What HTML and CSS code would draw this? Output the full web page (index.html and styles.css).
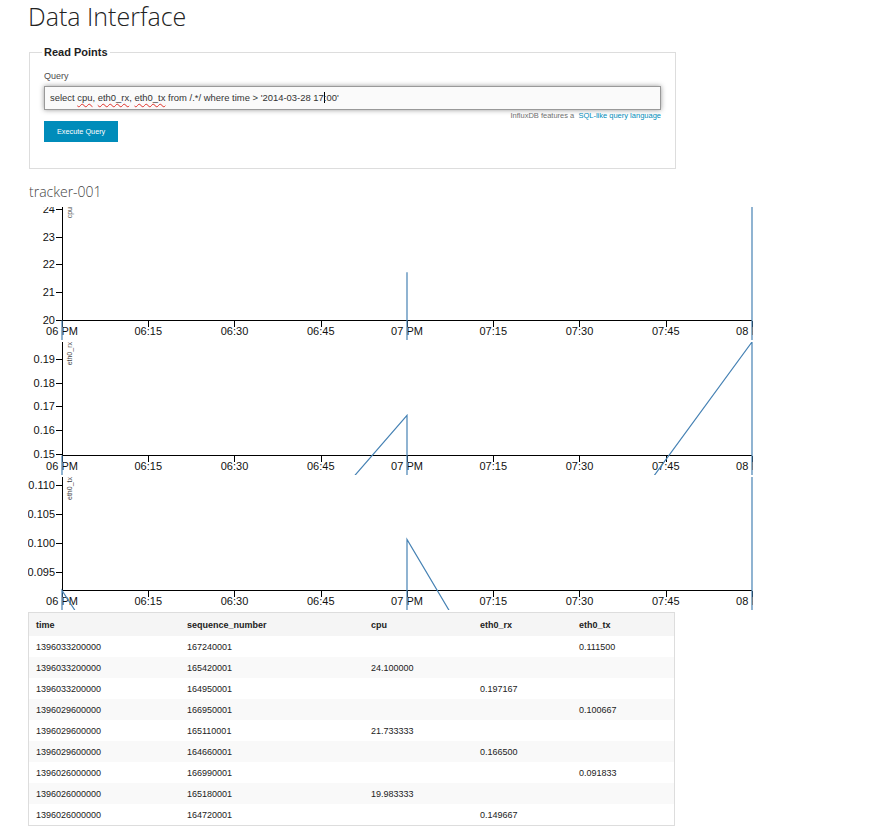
FILE: index.html
```html
<!DOCTYPE html>
<html lang="en">
<head>
<meta charset="utf-8">
<title>Data Interface</title>
<link rel="stylesheet" href="styles.css">
</head>
<body>
<div class="page">
  <h1 class="title">Data Interface</h1>

  <fieldset class="panel">
    <legend class="panel-legend">Read Points</legend>
    <label class="field-label">Query</label>
    <div class="query-input"><span class="sp">select </span><span class="misspelt">cpu</span><span class="sp">, </span><span class="misspelt">eth0_rx</span><span class="sp">, </span><span class="misspelt">eth0_tx</span><span class="sp"> from /.*/ where time &gt; '2014-03-28 17</span><span class="caret"></span><span class="sp">:00'</span></div>
    <div class="help">InfluxDB features a&nbsp; <a class="help-link" href="#">SQL-like query language</a></div>
    <button class="btn" type="button">Execute Query</button>
  </fieldset>

  <h2 class="series-title">tracker-001</h2>

  <div class="charts">
    <svg class="chart" width="725" height="133" viewBox="0 0 725 133">
      <g transform="translate(34,0)">
        <g class="axis">
          <path d="M0.5,0V113.5H690"/>
          <g class="ytick"><line x1="-6" x2="0" y1="113.04" y2="113.04"/><text x="-7" y="113.04" dy=".32em">20</text></g>
          <g class="ytick"><line x1="-6" x2="0" y1="85.47" y2="85.47"/><text x="-7" y="85.47" dy=".32em">21</text></g>
          <g class="ytick"><line x1="-6" x2="0" y1="57.9" y2="57.9"/><text x="-7" y="57.9" dy=".32em">22</text></g>
          <g class="ytick"><line x1="-6" x2="0" y1="30.33" y2="30.33"/><text x="-7" y="30.33" dy=".32em">23</text></g>
          <g class="ytick"><line x1="-6" x2="0" y1="2.76" y2="2.76"/><text x="-7" y="2.76" dy=".32em">24</text></g>
          <g class="xtick"><line x1="0.5" x2="0.5" y1="113.5" y2="119.5"/><text x="0" y="127.5">06 PM</text></g>
          <g class="xtick"><line x1="86.5" x2="86.5" y1="113.5" y2="119.5"/><text x="86.25" y="127.5">06:15</text></g>
          <g class="xtick"><line x1="172.5" x2="172.5" y1="113.5" y2="119.5"/><text x="172.5" y="127.5">06:30</text></g>
          <g class="xtick"><line x1="259.5" x2="259.5" y1="113.5" y2="119.5"/><text x="258.75" y="127.5">06:45</text></g>
          <g class="xtick"><line x1="345.5" x2="345.5" y1="113.5" y2="119.5"/><text x="345" y="127.5">07 PM</text></g>
          <g class="xtick"><line x1="431.5" x2="431.5" y1="113.5" y2="119.5"/><text x="431.25" y="127.5">07:15</text></g>
          <g class="xtick"><line x1="517.5" x2="517.5" y1="113.5" y2="119.5"/><text x="517.5" y="127.5">07:30</text></g>
          <g class="xtick"><line x1="604.5" x2="604.5" y1="113.5" y2="119.5"/><text x="603.75" y="127.5">07:45</text></g>
          <g class="xtick"><line x1="690" x2="690" y1="113.5" y2="119.5"/><text x="690" y="127.5">08 PM</text></g>
          <text class="series-label" transform="rotate(-90)" y="5" dy=".71em">cpu</text>
        </g>
        <path class="line" d="M690,664.4L690,0L690,664.4L345,664.4L345,65.25L345,664.4L0,664.4L0,113.5L0,664.4"/>
      </g>
    </svg>

    <svg class="chart" width="725" height="133" viewBox="0 0 725 133">
      <g transform="translate(34,0)">
        <g class="axis">
          <path d="M0.5,0V113.5H690"/>
          <g class="ytick"><line x1="-6" x2="0" y1="112.7" y2="112.7"/><text x="-7" y="112.7" dy=".32em">0.15</text></g>
          <g class="ytick"><line x1="-6" x2="0" y1="88.81" y2="88.81"/><text x="-7" y="88.81" dy=".32em">0.16</text></g>
          <g class="ytick"><line x1="-6" x2="0" y1="64.92" y2="64.92"/><text x="-7" y="64.92" dy=".32em">0.17</text></g>
          <g class="ytick"><line x1="-6" x2="0" y1="41.02" y2="41.02"/><text x="-7" y="41.02" dy=".32em">0.18</text></g>
          <g class="ytick"><line x1="-6" x2="0" y1="17.13" y2="17.13"/><text x="-7" y="17.13" dy=".32em">0.19</text></g>
          <g class="xtick"><line x1="0.5" x2="0.5" y1="113.5" y2="119.5"/><text x="0" y="127.5">06 PM</text></g>
          <g class="xtick"><line x1="86.5" x2="86.5" y1="113.5" y2="119.5"/><text x="86.25" y="127.5">06:15</text></g>
          <g class="xtick"><line x1="172.5" x2="172.5" y1="113.5" y2="119.5"/><text x="172.5" y="127.5">06:30</text></g>
          <g class="xtick"><line x1="259.5" x2="259.5" y1="113.5" y2="119.5"/><text x="258.75" y="127.5">06:45</text></g>
          <g class="xtick"><line x1="345.5" x2="345.5" y1="113.5" y2="119.5"/><text x="345" y="127.5">07 PM</text></g>
          <g class="xtick"><line x1="431.5" x2="431.5" y1="113.5" y2="119.5"/><text x="431.25" y="127.5">07:15</text></g>
          <g class="xtick"><line x1="517.5" x2="517.5" y1="113.5" y2="119.5"/><text x="517.5" y="127.5">07:30</text></g>
          <g class="xtick"><line x1="604.5" x2="604.5" y1="113.5" y2="119.5"/><text x="603.75" y="127.5">07:45</text></g>
          <g class="xtick"><line x1="690" x2="690" y1="113.5" y2="119.5"/><text x="690" y="127.5">08 PM</text></g>
          <text class="series-label" transform="rotate(-90)" y="5" dy=".71em">eth0_rx</text>
        </g>
        <path class="line" d="M690,471.1L690,471.1L690,0L345,471.1L345,471.1L345,73.28L0,471.1L0,471.1L0,113.5"/>
      </g>
    </svg>

    <svg class="chart" width="725" height="133" viewBox="0 0 725 133">
      <g transform="translate(34,0)">
        <g class="axis">
          <path d="M0.5,0V113.5H690"/>
          <g class="ytick"><line x1="-6" x2="0" y1="95.23" y2="95.23"/><text x="-7" y="95.23" dy=".32em">0.095</text></g>
          <g class="ytick"><line x1="-6" x2="0" y1="66.37" y2="66.37"/><text x="-7" y="66.37" dy=".32em">0.100</text></g>
          <g class="ytick"><line x1="-6" x2="0" y1="37.52" y2="37.52"/><text x="-7" y="37.52" dy=".32em">0.105</text></g>
          <g class="ytick"><line x1="-6" x2="0" y1="8.66" y2="8.66"/><text x="-7" y="8.66" dy=".32em">0.110</text></g>
          <g class="xtick"><line x1="0.5" x2="0.5" y1="113.5" y2="119.5"/><text x="0" y="127.5">06 PM</text></g>
          <g class="xtick"><line x1="86.5" x2="86.5" y1="113.5" y2="119.5"/><text x="86.25" y="127.5">06:15</text></g>
          <g class="xtick"><line x1="172.5" x2="172.5" y1="113.5" y2="119.5"/><text x="172.5" y="127.5">06:30</text></g>
          <g class="xtick"><line x1="259.5" x2="259.5" y1="113.5" y2="119.5"/><text x="258.75" y="127.5">06:45</text></g>
          <g class="xtick"><line x1="345.5" x2="345.5" y1="113.5" y2="119.5"/><text x="345" y="127.5">07 PM</text></g>
          <g class="xtick"><line x1="431.5" x2="431.5" y1="113.5" y2="119.5"/><text x="431.25" y="127.5">07:15</text></g>
          <g class="xtick"><line x1="517.5" x2="517.5" y1="113.5" y2="119.5"/><text x="517.5" y="127.5">07:30</text></g>
          <g class="xtick"><line x1="604.5" x2="604.5" y1="113.5" y2="119.5"/><text x="603.75" y="127.5">07:45</text></g>
          <g class="xtick"><line x1="690" x2="690" y1="113.5" y2="119.5"/><text x="690" y="127.5">08 PM</text></g>
          <text class="series-label" transform="rotate(-90)" y="5" dy=".71em">eth0_tx</text>
        </g>
        <path class="line" d="M690,0L690,643.5L690,643.5L345,62.52L345,643.5L345,643.5L0,113.5L0,643.5L0,643.5"/>
      </g>
    </svg>
  </div>

  <table class="points">
    <thead>
      <tr><th class="c-time">time</th><th class="c-seq">sequence_number</th><th class="c-cpu">cpu</th><th class="c-rx">eth0_rx</th><th class="c-tx">eth0_tx</th></tr>
    </thead>
    <tbody>
      <tr><td>1396033200000</td><td>167240001</td><td></td><td></td><td>0.111500</td></tr>
      <tr><td>1396033200000</td><td>165420001</td><td>24.100000</td><td></td><td></td></tr>
      <tr><td>1396033200000</td><td>164950001</td><td></td><td>0.197167</td><td></td></tr>
      <tr><td>1396029600000</td><td>166950001</td><td></td><td></td><td>0.100667</td></tr>
      <tr><td>1396029600000</td><td>165110001</td><td>21.733333</td><td></td><td></td></tr>
      <tr><td>1396029600000</td><td>164660001</td><td></td><td>0.166500</td><td></td></tr>
      <tr><td>1396026000000</td><td>166990001</td><td></td><td></td><td>0.091833</td></tr>
      <tr><td>1396026000000</td><td>165180001</td><td>19.983333</td><td></td><td></td></tr>
      <tr><td>1396026000000</td><td>164720001</td><td></td><td>0.149667</td><td></td></tr>
    </tbody>
  </table>
</div>
</body>
</html>
```

FILE: styles.css
```css
html, body {
  margin: 0;
  padding: 0;
  background: #fff;
}

body {
  font-family: "Liberation Sans", Arial, sans-serif;
  color: #222;
}

.page {
  padding: 0 0 0 28px;
}

.title {
  margin: 0;
  font-family: "Open Sans", sans-serif;
  font-weight: 300;
  font-size: 25px;
  line-height: 32px;
  color: #222;
}

.panel {
  box-sizing: border-box;
  width: 647px;
  margin: 14px 0 0 1px;
  padding: 11px 14px 26px;
  border: 1px solid #ddd;
}

.panel-legend {
  margin-left: -2px;
  padding: 0 2px;
  font-weight: bold;
  font-size: 11px;
  line-height: 13px;
  color: #222;
}

.field-label {
  display: block;
  font-size: 9px;
  line-height: 12px;
  margin-bottom: 4px;
  color: #4d4d4d;
}

.query-input {
  box-sizing: border-box;
  height: 24px;
  padding: 0 5px;
  border: 1px solid #999;
  background: #fafafa;
  box-shadow: 0 0 5px #999;
  font-size: 9.45px;
  line-height: 22px;
  color: #333;
  white-space: pre;
}

.misspelt {
  text-decoration: underline wavy #e0322a;
  text-decoration-thickness: 1px;
  text-underline-offset: 2px;
}

.caret {
  display: inline-block;
  width: 0;
  height: 11px;
  border-left: 1px solid #000;
  vertical-align: -2px;
  margin-right: -1px;
}

.help {
  margin-top: 1px;
  text-align: right;
  font-size: 7.5px;
  line-height: 10px;
  color: #6f6f6f;
}

.help-link {
  color: #008cba;
  text-decoration: none;
}

.btn {
  display: block;
  height: 21px;
  padding: 0 13px;
  border: 0;
  background: #008cba;
  color: #fff;
  font-family: "Liberation Sans", Arial, sans-serif;
  font-size: 7.3px;
  line-height: 21px;
}

.series-title {
  margin: 14px 0 6px 1px;
  font-family: "Open Sans", sans-serif;
  font-weight: 300;
  font-size: 14px;
  line-height: 18px;
  color: #444;
}

.charts {
  display: flex;
  flex-direction: column;
  gap: 2px;
}

.chart {
  display: block;
  overflow: hidden;
  font-family: "Liberation Sans", Arial, sans-serif;
}

.axis path,
.axis line {
  fill: none;
  stroke: #000;
  stroke-width: 1px;
  shape-rendering: crispEdges;
}

.axis text {
  font-size: 11px;
  fill: #111;
}

.ytick text {
  text-anchor: end;
}

.xtick text {
  text-anchor: middle;
}

.axis .series-label {
  font-size: 7px;
  fill: #444;
  text-anchor: end;
}

.line {
  fill: none;
  stroke: #4682b4;
  stroke-width: 1.2px;
}

.points {
  box-sizing: border-box;
  width: 647px;
  margin-top: 2px;
  border: 1px solid #ddd;
  border-collapse: separate;
  border-spacing: 0;
  table-layout: fixed;
  font-size: 9px;
  color: #222;
}

.points th,
.points td {
  padding: 0 7px;
  text-align: left;
  white-space: nowrap;
}

.points thead tr {
  background: #f5f5f5;
}

.points th {
  height: 23px;
  font-weight: bold;
}

.points td {
  height: 21px;
}

.points tbody tr:nth-child(even) {
  background: #f9f9f9;
}

.c-time { width: 137px; }
.c-seq { width: 170px; }
.c-cpu { width: 95px; }
.c-rx { width: 85px; }
.c-tx { width: 88px; }
```
